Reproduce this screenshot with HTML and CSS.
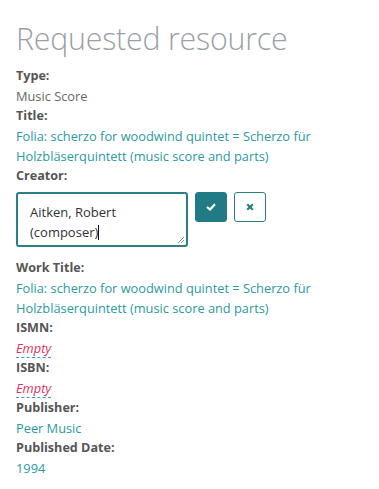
FILE: index.html
```html
<!DOCTYPE html>
<html>
<head>
<meta charset="utf-8">
<link rel="stylesheet" href="styles.css">
</head>
<body>
<div class="page">
  <h1 class="title">Requested resource</h1>
  <dl class="fields">
    <dt>Type:</dt>
    <dd class="plain">Music Score</dd>
    <dt>Title:</dt>
    <dd class="link">Folia: scherzo for woodwind quintet = Scherzo für Holzbläserquintett (music score and parts)</dd>
    <dt>Creator:</dt>
    <dd class="edit">
      <div class="editor">
        <div class="textarea">Aitken, Robert (composer)<span class="caret"></span>
          <svg class="grip" width="9" height="9" viewBox="0 0 9 9"><path d="M8 2 L2 8 M8 5 L5 8" stroke="#888" stroke-width="1" fill="none"/></svg>
        </div>
        <button class="btn ok"><svg width="10" height="8" viewBox="0 0 10 8"><path d="M1 4 L4 6.5 L9 1.2" stroke="#fff" stroke-width="2.2" fill="none"/></svg></button>
        <button class="btn cancel"><svg width="8" height="8" viewBox="0 0 8 8"><path d="M1.2 1.2 L6.8 6.8 M6.8 1.2 L1.2 6.8" stroke="#2a7f87" stroke-width="2.2" fill="none"/></svg></button>
      </div>
    </dd>
    <dt>Work Title:</dt>
    <dd class="link">Folia: scherzo for woodwind quintet = Scherzo für Holzbläserquintett (music score and parts)</dd>
    <dt>ISMN:</dt>
    <dd><span class="empty">Empty</span></dd>
    <dt>ISBN:</dt>
    <dd><span class="empty">Empty</span></dd>
    <dt>Publisher:</dt>
    <dd class="link">Peer Music</dd>
    <dt>Published Date:</dt>
    <dd class="link">1994</dd>
  </dl>
</div>
</body>
</html>
```
FILE: styles.css
```css
html, body {
  margin: 0;
  padding: 0;
  background: #fff;
}
.page {
  padding: 18px 16px 0 16px;
  font-family: "Open Sans", "Noto Sans", sans-serif;
  font-size: 12.8px;
  line-height: 20px;
  color: #555;
}
.title {
  margin: 0 0 6px 0;
  font-weight: 300;
  font-size: 30.3px;
  line-height: 42px;
  color: #9aa0a6;
  letter-spacing: -0.2px;
}
.fields {
  margin: 0;
  width: 320px;
}
.fields dt {
  font-weight: 700;
  font-size: 12.6px;
  color: #555;
}
.fields dd {
  margin: 0;
}
.plain {
  color: #666;
}
.link {
  color: #2a9aa0;
}
.empty {
  color: #e0305e;
  font-style: italic;
  border-bottom: 1px dashed #3a96dc;
}
.edit {
  padding: 6px 0 11px 0;
}
.editor {
  display: flex;
  align-items: flex-start;
  gap: 7px;
}
.textarea {
  position: relative;
  box-sizing: border-box;
  width: 172px;
  height: 55px;
  border: 2px solid #2a7f87;
  border-radius: 3px;
  padding: 8px 12px 0 12px;
  font-size: 13px;
  line-height: 20px;
  color: #333;
}
.caret {
  display: inline-block;
  width: 1px;
  height: 15px;
  background: #111;
  vertical-align: -3px;
}
.grip {
  position: absolute;
  right: 1px;
  bottom: 1px;
}
.btn {
  box-sizing: border-box;
  width: 32px;
  height: 30px;
  border-radius: 3px;
  padding: 0;
  display: flex;
  align-items: center;
  justify-content: center;
}
.ok {
  background: #217b84;
  border: 1px solid #217b84;
}
.cancel {
  background: #fff;
  border: 1px solid #2a7f87;
}
```
